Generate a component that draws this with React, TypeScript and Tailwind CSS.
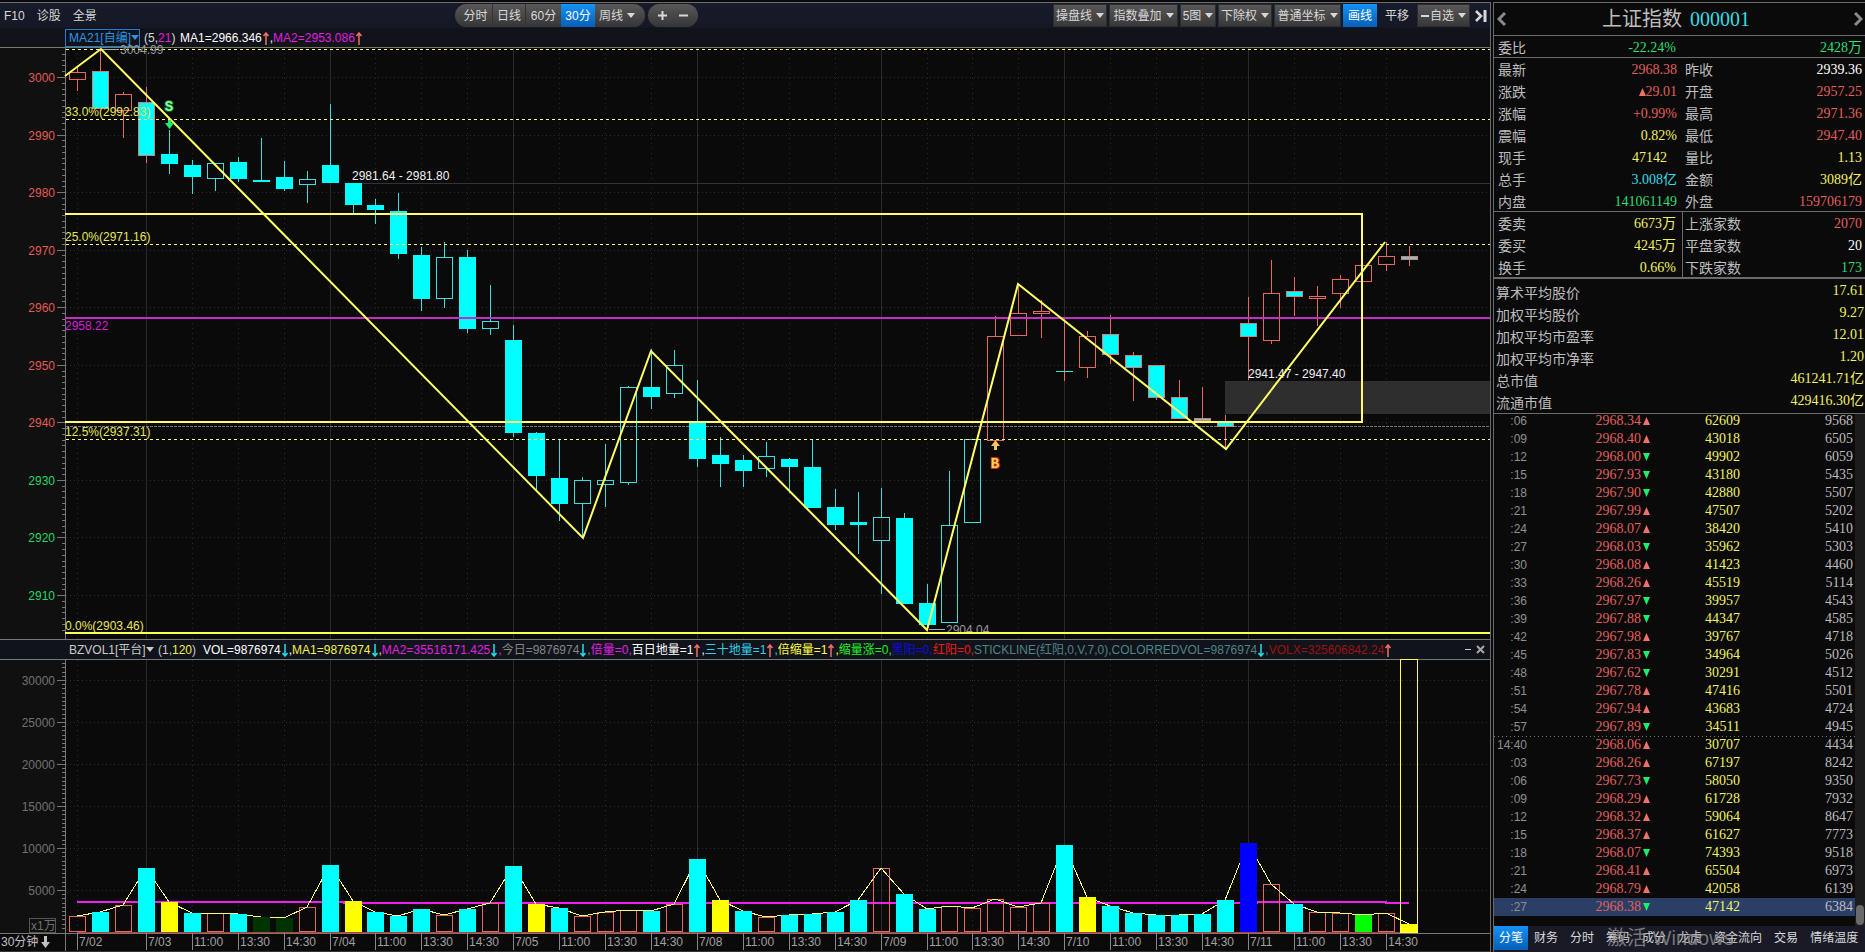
import React from 'react';

const SANS = "font-['Liberation_Sans','Noto_Sans_CJK_SC',sans-serif]";
const SERIF = "font-['Liberation_Serif','Noto_Sans_CJK_SC',serif]";

const CYAN = '#00ffff';
const TEAL = '#3fdede';
const RED = '#e8685f';
const YELLOW = '#ffff66';

type CandleKind = 'down' | 'hollow' | 'up' | 'mixed' | 'flat';

// kind, high, body top, body bottom, low
const candles: [CandleKind, number, number, number, number][] = [
    ['up', 67, 72, 80, 91], ['mixed', 49, 71, 109, 109], ['up', 92, 94, 111, 138], ['mixed', 87, 102, 156, 163],
    ['down', 130, 154, 164, 174], ['down', 160, 165, 177, 194], ['hollow', 163, 163, 179, 191], ['down', 157, 162, 179, 182],
    ['down', 138, 180, 182, 182], ['down', 161, 177, 189, 191], ['hollow', 171, 179, 185, 203], ['down', 104, 165, 183, 183],
    ['down', 183, 183, 205, 213], ['down', 199, 205, 210, 224], ['down', 193, 211, 254, 259], ['down', 247, 255, 299, 311],
    ['hollow', 242, 257, 299, 308], ['down', 250, 257, 329, 333], ['hollow', 285, 321, 329, 335], ['down', 325, 340, 433, 437],
    ['down', 432, 433, 476, 491], ['down', 440, 478, 504, 521], ['hollow', 477, 480, 504, 538], ['hollow', 444, 480, 485, 507],
    ['hollow', 386, 387, 483, 485], ['down', 349, 387, 397, 409], ['hollow', 350, 365, 394, 398], ['down', 380, 422, 459, 467],
    ['down', 437, 455, 464, 487], ['down', 455, 460, 471, 487], ['hollow', 442, 456, 469, 477], ['down', 458, 459, 467, 493],
    ['down', 440, 467, 508, 508], ['down', 489, 507, 525, 530], ['down', 492, 522, 525, 554], ['hollow', 488, 517, 541, 594],
    ['down', 513, 518, 604, 604], ['down', 584, 603, 625, 630], ['hollow', 471, 525, 623, 623], ['hollow', 439, 439, 523, 523],
    ['up', 316, 336, 441, 441], ['up', 285, 313, 336, 336], ['up', 300, 311, 314, 338], ['flat', 318, 371, 372, 381],
    ['up', 331, 336, 368, 378], ['mixed', 315, 334, 355, 364], ['mixed', 352, 355, 368, 401], ['mixed', 365, 365, 398, 400],
    ['mixed', 380, 397, 419, 419], ['mixed', 387, 418, 421, 421], ['mixed', 415, 422, 427, 449], ['mixed', 297, 323, 337, 380],
    ['up', 260, 293, 341, 344], ['mixed', 277, 291, 297, 316], ['up', 286, 296, 299, 326], ['up', 275, 279, 294, 308],
    ['up', 265, 265, 282, 282], ['up', 242, 256, 265, 271], ['mixed', 246, 256, 260, 266],
];

// bar colour and top edge
const volumes: [string, number][] = [
    ['r', 916], ['c', 912], ['r', 905], ['c', 868], ['y', 902], ['c', 913], ['r', 913], ['c', 914], ['g', 917], ['g', 918],
    ['r', 907], ['c', 865], ['y', 901], ['c', 912], ['c', 916], ['c', 909], ['r', 915], ['c', 909], ['r', 903], ['c', 866],
    ['y', 904], ['c', 908], ['r', 916], ['r', 912], ['r', 910], ['c', 911], ['r', 904], ['c', 859], ['y', 900], ['c', 911],
    ['r', 917], ['c', 915], ['c', 914], ['c', 912], ['c', 900], ['r', 868], ['c', 894], ['c', 909], ['r', 906], ['r', 908],
    ['r', 899], ['r', 907], ['r', 903], ['c', 845], ['y', 897], ['c', 906], ['c', 913], ['c', 915], ['c', 915], ['c', 914],
    ['c', 900], ['b', 843], ['r', 884], ['c', 904], ['r', 912], ['r', 913], ['l', 915], ['r', 913], ['y', 924],
];

const volumeFill: Record<string, string> = { c: CYAN, y: '#ffff00', g: '#003300', b: '#0000ff', l: '#00ff00' };

const timeLabels = ['7/02', '7/03', '11:00', '13:30', '14:30', '7/04', '11:00', '13:30', '14:30', '7/05', '11:00', '13:30', '14:30',
    '7/08', '11:00', '13:30', '14:30', '7/09', '11:00', '13:30', '14:30', '7/10', '11:00', '13:30', '14:30', '7/11', '11:00', '13:30', '14:30'];

const barX = (i: number) => Math.round(77 + 22.96 * i);
const priceY = (p: number) => Math.round(77 + (3000 - p) * 5.756);
const volumeY = (v: number) => Math.round(932 - (v / 5000) * 42);

const timeTicks = timeLabels.map((label, i) => ({
    label,
    x: barX(i === 0 ? 0 : 1 + i * 2),
    day: i > 0 && label.includes('/'),
}));

const VerticalGrid = ({ top, bottom }: { top: number; bottom: number }) => (
    <>
        {timeTicks.map((t) => (
            <line key={t.x} x1={t.x + 0.5} x2={t.x + 0.5} y1={top} y2={bottom}
                stroke={t.day ? '#2a2a2a' : '#2c2c2c'} strokeDasharray={t.day ? undefined : '1 4'} />
        ))}
    </>
);

const Candle = ({ i }: { i: number }) => {
    const [kind, high, top, bottom, low] = candles[i];
    const x = barX(i);
    const gray = i === candles.length - 1 || i === 49;
    const wick = kind === 'down' || kind === 'hollow' ? TEAL : RED;
    const hollow = kind === 'up' || kind === 'hollow';
    return (
        <g>
            {top > high && <rect x={x} y={high} width={1} height={top - high} fill={wick} />}
            {low > bottom && <rect x={x} y={bottom} width={1} height={low - bottom} fill={wick} />}
            {kind === 'down' && <rect x={x - 8} y={top} width={17} height={bottom - top} fill={CYAN} />}
            {kind === 'flat' && <rect x={x - 8} y={top} width={17} height={1} fill={TEAL} />}
            {hollow && <rect x={x - 7.5} y={top + 0.5} width={16} height={Math.max(bottom - top - 1, 1)} fill="none" stroke={wick} />}
            {kind === 'mixed' && (
                <rect x={x - 7.5} y={top + 0.5} width={16} height={bottom - top - 1} fill={gray ? '#7fc4c4' : CYAN} stroke="#c98480" />
            )}
        </g>
    );
};

const levels = [
    { y: 49, label: '' },
    { y: 119, label: '33.0%(2992.83)' },
    { y: 244, label: '25.0%(2971.16)' },
    { y: 439, label: '12.5%(2937.31)' },
];

const PriceChart = () => (
    <svg viewBox="0 48 1490 591" className="block w-full overflow-visible text-[12px]" role="img" aria-label="K线图">
        <rect x={0} y={48} width={65} height={591} fill="#101010" />
        <g shapeRendering="crispEdges">
            <VerticalGrid top={48} bottom={639} />
            {Array.from({ length: 10 }, (_, i) => priceY(3000 - i * 10)).map((y) => (
                <g key={y}>
                    <line x1={66} x2={1490} y1={y + 0.5} y2={y + 0.5} stroke="#2c2c2c" strokeDasharray="1 3" />
                    <line x1={57} x2={65} y1={y + 0.5} y2={y + 0.5} stroke="#777" />
                </g>
            ))}
            {Array.from({ length: 101 }, (_, i) => priceY(3004 - i)).map((y) => (
                <line key={y} x1={62} x2={65} y1={y + 0.5} y2={y + 0.5} stroke="#777" />
            ))}
            <line x1={65.5} x2={65.5} y1={48} y2={639} stroke="#777" />
            <rect x={1225} y={381} width={265} height={33} fill="#2e2e2e" />
            <line x1={361} x2={1490} y1={183.5} y2={183.5} stroke="#333" />
            <line x1={66} x2={1490} y1={426.5} y2={426.5} stroke="#777" strokeDasharray="3 1" />
            {candles.map((_, i) => <Candle key={i} i={i} />)}
            {levels.map((l) => (
                <line key={l.y} x1={66} x2={1490} y1={l.y + 0.5} y2={l.y + 0.5} stroke="#ffff80" strokeDasharray="3 3" />
            ))}
            <rect x={65} y={317} width={1425} height={2} fill="#c22fc2" />
            <path d="M65 214H1362V422H65" fill="none" stroke="#ffff70" strokeWidth={2} />
        </g>

        {Array.from({ length: 10 }, (_, i) => 3000 - i * 10).map((p) => (
            <text key={p} x={55} y={priceY(p) + 5} textAnchor="end" fill={p >= 2940 ? '#e25a55' : '#22d867'}>{p}</text>
        ))}
        <g fill="#e6e65c">
            {levels.map((l) => <text key={l.y} x={65} y={l.y - 3}>{l.label}</text>)}
            <text x={65} y={630}>0.0%(2903.46)</text>
        </g>
        <text x={65} y={330} fill="#d81fd8">2958.22</text>
        <text x={352} y={180} fill="#f0f0f0">2981.64 - 2981.80</text>
        <text x={1248} y={378} fill="#f0f0f0">2941.47 - 2947.40</text>

        <path d="M101 49.500H119M929 629.500H945" stroke="#aaa" fill="none" />
        <text x={120} y={54} fill="#9a9a9a">3004.99</text>
        <text x={946} y={634} fill="#9a9a9a">2904.04</text>
        <rect x={940} y={632} width={60} height={7} fill="#0a0a0a" />

        <polyline points="65,76 101,49 583,538 651,351 927,630 1018,284 1226,449 1385,242" fill="none" stroke={YELLOW} strokeWidth={2} />
        <rect x={65} y={632} width={1425} height={2} fill="#ffff50" />

        <text x={169} y={111} textAnchor="middle" fill="#8dffa6" stroke="#0b6b2a" strokeWidth={2} paintOrder="stroke"
            className="font-['Liberation_Mono',monospace] text-[14px] font-bold">S</text>
        <path d="M168 120h3v3h3l-4.500 6-4.500-6h3z" fill="#19f06a" />
        <path d="M994 450h3v-4h3l-4.500-6-4.500 6h3z" fill="#f0c860" />
        <text x={995} y={468} textAnchor="middle" fill="#ffcf5a" stroke="#c03010" strokeWidth={2} paintOrder="stroke"
            className="font-['Liberation_Mono',monospace] text-[14px] font-bold">B</text>
    </svg>
);

const VolumeChart = () => (
    <svg viewBox="0 660 1490 292" className="block w-full overflow-visible text-[12px]" role="img" aria-label="成交量">
        <rect x={0} y={660} width={65} height={273} fill="#101010" />
        <g shapeRendering="crispEdges">
            <VerticalGrid top={660} bottom={933} />
            {[5000, 10000, 15000, 20000, 25000, 30000].map((v) => (
                <g key={v}>
                    <line x1={66} x2={1490} y1={volumeY(v) + 0.5} y2={volumeY(v) + 0.5} stroke="#2c2c2c" strokeDasharray="1 3" />
                    <line x1={57} x2={65} y1={volumeY(v) + 0.5} y2={volumeY(v) + 0.5} stroke="#777" />
                </g>
            ))}
            {Array.from({ length: 64 }, (_, i) => volumeY(500 + i * 500)).map((y) => (
                <line key={y} x1={62} x2={65} y1={y + 0.5} y2={y + 0.5} stroke="#777" />
            ))}
            <line x1={65.5} x2={65.5} y1={660} y2={952} stroke="#777" />
            <line x1={0} x2={1490} y1={933.5} y2={933.5} stroke="#777" />
            <path d="M77 902H344V903H1257V902H1386V903H1409" fill="none" stroke="#f01ff0" strokeWidth={2} />
            {volumes.map(([c, y], i) => c === 'r' && (
                <rect key={i} x={barX(i) - 7.5} y={y + 0.5} width={16} height={931 - y} fill="none" stroke={RED} />
            ))}
            <polyline points={volumes.map(([, y], i) => `${barX(i)},${y}`).join(' ')} fill="none" stroke="#ffff80" />
            {volumes.map(([c, y], i) => c !== 'r' && (
                <rect key={i} x={barX(i) - 8} y={y} width={17} height={933 - y} fill={volumeFill[c]} />
            ))}
            <rect x={77} y={932} width={1323} height={1} fill="#c03a34" />
            <rect x={1400.5} y={659.5} width={17} height={273} fill="none" stroke="#ffff50" />
            {timeTicks.map((t) => (
                <line key={t.x} x1={t.x + 0.5} x2={t.x + 0.5} y1={933} y2={950} stroke="#888" />
            ))}
            <line x1={0} x2={1490} y1={951.5} y2={951.5} stroke="#333" />
            <rect x={29.5} y={918.5} width={26} height={14} fill="none" stroke="#555" />
        </g>
        {[5000, 10000, 15000, 20000, 25000, 30000].map((v) => (
            <text key={v} x={55} y={volumeY(v) + 5} textAnchor="end" fill="#707070">{v}</text>
        ))}
        <text x={31} y={930} fill="#707070">x1万</text>
        {timeTicks.map((t) => (
            <text key={t.x} x={t.x + 2} y={946} fill="#a0a0a0">{t.label}</text>
        ))}
        <text x={1} y={946} fill="#c0c0c0">30分钟</text>
        <path d="M44 936h3v6h3l-4.500 6-4.500-6h3z" fill="#c0c0c0" />
    </svg>
);

const Caret = () => (
    <svg viewBox="0 0 8 5" className="inline-block h-[5px] w-2 shrink-0" fill="currentColor" aria-hidden="true">
        <path d="M0 0h8L4 5z" />
    </svg>
);

const grayButton = 'flex h-[23px] items-center justify-center gap-1 border border-[#2c2c2c] bg-linear-to-b from-[#585858] to-[#383838]';
const blueButton = 'flex h-[23px] items-center justify-center bg-linear-to-b from-[#1592f5] to-[#0560b8] text-white';

const Toolbar = () => (
    <header className="flex h-[25px] items-center bg-linear-to-b from-[#171a2a] to-[#151824] text-[12px] leading-4 text-[#d8d8d8]">
        <nav className="flex w-[455px] gap-3 pl-1">
            <button>F10</button>
            <button>诊股</button>
            <button>全景</button>
        </nav>
        <div className="flex h-[23px] items-center overflow-hidden rounded-full bg-linear-to-b from-[#585858] to-[#363636]">
            <button className="h-full w-[38px] border-r border-[#333] pl-1">分时</button>
            <button className="h-full w-[33px] border-r border-[#333]">日线</button>
            <button className="h-full w-[35px]">60分</button>
            <button className={`${blueButton} w-[34px]`}>30分</button>
            <button className="flex h-full w-[50px] items-center gap-1 pl-1">周线 <Caret /></button>
        </div>
        <div className="ml-[3px] flex h-[23px] w-[50px] items-center justify-center gap-3 rounded-full bg-linear-to-b from-[#585858] to-[#363636]">
            <button aria-label="放大">
                <svg viewBox="0 0 9 9" className="size-[9px]" fill="currentColor"><path d="M3.500 0h2v3.500H9v2H5.500V9h-2V5.500H0v-2h3.500z" /></svg>
            </button>
            <button aria-label="缩小">
                <svg viewBox="0 0 9 9" className="size-[9px]" fill="currentColor"><path d="M0 3.500h9v2H0z" /></svg>
            </button>
        </div>
        <div className="ml-auto flex items-center gap-[2px]">
            <button className={`${grayButton} w-[54px]`}>操盘线<Caret /></button>
            <button className={`${grayButton} w-[69px]`}>指数叠加<Caret /></button>
            <button className={`${grayButton} w-9`}>5图<Caret /></button>
            <button className={`${grayButton} w-[54px]`}>下除权<Caret /></button>
            <button className={`${grayButton} w-[67px]`}>普通坐标<Caret /></button>
            <button className={`${blueButton} w-[34px]`}>画线</button>
            <button className="w-9">平移</button>
            <button className={`${grayButton} w-[53px]`}>
                <span className="flex items-center gap-px"><span className="h-0.5 w-2 bg-[#d8d8d8]" />自选</span><Caret />
            </button>
            <button className="flex w-[18px] justify-center" aria-label="收起">
                <svg viewBox="0 0 12 12" className="size-3" fill="none" stroke="currentColor">
                    <path d="M1 1l5 5-5 5" strokeWidth="2.5" />
                    <path d="M10 0v12" strokeWidth="3" />
                </svg>
            </button>
        </div>
    </header>
);

const Arrow = ({ up }: { up?: boolean }) => (
    <svg viewBox="0 0 8 13" className={up ? 'inline-block h-[13px] w-2 text-[#f0706a]' : 'inline-block h-[13px] w-2 text-[#20e0f0]'}
        fill="none" stroke="currentColor" strokeWidth="1.5" aria-hidden="true">
        <path d={up ? 'M4 13V1M1.500 4L4 1l2.500 3' : 'M4 0v12M1.500 9L4 12l2.500-3'} />
    </svg>
);

const PriceIndicators = () => (
    <div className="flex h-5 items-center border-b border-[#7a7a60] bg-[#11131a] pl-[65px] text-[12px] leading-4 whitespace-pre text-[#d8d8d8]">
        <button className="flex h-[18px] items-center border border-[#1d7fd4] pl-[3px] text-[#2c93e8]">MA21[自编]<Caret /></button>
        <span className="ml-1 w-9">(5,<span className="text-[#e01fe0]">21</span>)</span>
        <span className="text-white">MA1=2966.346<Arrow up />,</span>
        <span className="text-[#e01fe0]">MA2=2953.086<Arrow up /></span>
    </div>
);

const VolumeIndicators = () => (
    <div className="flex h-5 items-center border-b border-[#777] bg-[#11131a] pr-1 pl-[69px] text-[12px] leading-4 whitespace-pre text-[#c8c8c8]">
        <button className="flex w-[89px] items-center">BZVOL1[平台]<Caret /></button>
        <span className="w-[45px]">(1,<span className="text-[#f0f050]">120</span>)</span>
        <span className="text-white">VOL=9876974<Arrow />,</span>
        <span className="text-[#f0f050]">MA1=9876974<Arrow />,</span>
        <span className="text-[#e01fe0]">MA2=35516171.425<Arrow />,</span>
        <span className="text-[#858585]">今日=9876974<Arrow />,</span>
        <span className="text-[#e01fe0]">倍量=0,</span>
        <span className="text-white">百日地量=1<Arrow up />,</span>
        <span className="text-[#30cfe6]">三十地量=1<Arrow up />,</span>
        <span className="text-[#ffff40]">倍缩量=1<Arrow up />,</span>
        <span className="text-[#20f020]">缩量涨=0,</span>
        <span className="text-[#0a0ae6]">黑阳=0,</span>
        <span className="text-[#f01818]">红阳=0,</span>
        <span className="text-[#4b8585]">STICKLINE(红阳,0,V,7,0),COLORREDVOL=9876974<Arrow />,</span>
        <span className="text-[#9c1212]">VOLX=325606842.24<Arrow up /></span>
        <button className="ml-auto flex h-4 w-4 items-center justify-center" aria-label="最小化"><span className="h-px w-1.5 bg-[#c8c8c8]" /></button>
        <button className="mr-px" aria-label="关闭">
            <svg viewBox="0 0 9 9" className="size-[9px]" stroke="#a8a8a8" strokeWidth="2"><path d="M1 1l7 7M8 1L1 8" /></svg>
        </button>
    </div>
);

const red = 'text-[#e0605c]';
const green = 'text-[#2fdc72]';
const yellow = 'text-[#f2f266]';
const cyan = 'text-[#35dde6]';

type Cell = [string, string, string];

const quotes: [Cell, Cell][] = [
    [['最新', '2968.38', red], ['昨收', '2939.36', 'text-white']],
    [['涨跌', '29.01', red], ['开盘', '2957.25', red]],
    [['涨幅', '+0.99%', red], ['最高', '2971.36', red]],
    [['震幅', '0.82%', yellow], ['最低', '2947.40', red]],
    [['现手', '47142', yellow], ['量比', '1.13', yellow]],
    [['总手', '3.008亿', cyan], ['金额', '3089亿', yellow]],
    [['内盘', '141061149', green], ['外盘', '159706179', red]],
];

const breadth: [Cell, Cell][] = [
    [['委卖', '6673万', yellow], ['上涨家数', '2070', red]],
    [['委买', '4245万', yellow], ['平盘家数', '20', 'text-white']],
    [['换手', '0.66%', yellow], ['下跌家数', '173', green]],
];

const averages = [
    ['算术平均股价', '17.61'],
    ['加权平均股价', '9.27'],
    ['加权平均市盈率', '12.01'],
    ['加权平均市净率', '1.20'],
    ['总市值', '461241.71亿'],
    ['流通市值', '429416.30亿'],
];

// time, price, up?, volume, count
const ticks: [string, string, boolean, number, number][] = [
    [':06', '2968.34', true, 62609, 9568], [':09', '2968.40', true, 43018, 6505], [':12', '2968.00', false, 49902, 6059],
    [':15', '2967.93', false, 43180, 5435], [':18', '2967.90', false, 42880, 5507], [':21', '2967.99', true, 47507, 5202],
    [':24', '2968.07', true, 38420, 5410], [':27', '2968.03', false, 35962, 5303], [':30', '2968.08', true, 41423, 4460],
    [':33', '2968.26', true, 45519, 5114], [':36', '2967.97', false, 39957, 4543], [':39', '2967.88', false, 44347, 4585],
    [':42', '2967.98', true, 39767, 4718], [':45', '2967.83', false, 34964, 5026], [':48', '2967.62', false, 30291, 4512],
    [':51', '2967.78', true, 47416, 5501], [':54', '2967.94', true, 43683, 4724], [':57', '2967.89', false, 34511, 4945],
    ['14:40', '2968.06', true, 30707, 4434], [':03', '2968.26', true, 67197, 8242], [':06', '2967.73', false, 58050, 9350],
    [':09', '2968.29', true, 61728, 7932], [':12', '2968.32', true, 59064, 8647], [':15', '2968.37', true, 61627, 7773],
    [':18', '2968.07', false, 74393, 9518], [':21', '2968.41', true, 65504, 6973], [':24', '2968.79', true, 42058, 6139],
    [':27', '2968.38', false, 47142, 6384],
];

const Triangle = ({ up }: { up: boolean }) => (
    <svg viewBox="0 0 7 8" className={up ? 'inline-block h-2 w-[7px] align-baseline text-[#f0706a]' : 'inline-block h-2 w-[7px] align-baseline text-[#19f06a]'}
        fill="currentColor" aria-hidden="true">
        <path d={up ? 'M3.500 0L7 8H0z' : 'M0 0h7L3.500 8z'} />
    </svg>
);

const QuoteRow = ({ left, right, divided }: { left: Cell; right: Cell; divided?: boolean }) => (
    <div className="flex h-[22px] leading-6">
        <div className={`flex w-[189px] justify-between pr-1.5 pl-1 ${divided ? 'border-r border-[#6a6a6a]' : ''}`}>
            <dt>{left[0]}</dt>
            <dd className={`${SERIF} ${left[2]} ${left[0] === '现手' ? 'pr-2.5' : ''}`}>
                {left[0] === '涨跌' && <Triangle up />}{left[1]}
            </dd>
        </div>
        <div className="flex flex-1 justify-between pr-[3px] pl-0.5">
            <dt>{right[0]}</dt>
            <dd className={`${SERIF} ${right[2]}`}>{right[1]}</dd>
        </div>
    </div>
);

const Chevron = ({ d }: { d: string }) => (
    <svg viewBox="0 0 9 14" className="h-3.5 w-[9px]" fill="none" stroke="#8a8a8a" strokeWidth="3"><path d={d} /></svg>
);

const tabs = ['分笔', '财务', '分时', '筹码', '成分', '龙虎', '资金流向', '交易', '情绪温度'];

const QuotePanel = () => (
    <aside className="flex flex-col border-t border-l border-[#6a6a6a] text-[14px] text-[#bdbdbd]">
        <div className="flex h-[33px] items-center border-b border-[#6a6a6a] pr-0.5 pl-[3px]">
            <button aria-label="上一个"><Chevron d="M8 1L2 7l6 6" /></button>
            <h1 className="flex flex-1 items-center justify-center gap-2 pr-2 text-[20px]">
                上证指数 <span className={`${SERIF} ${cyan}`}>000001</span>
            </h1>
            <button aria-label="下一个"><Chevron d="M1 1l6 6-6 6" /></button>
        </div>
        <dl className="flex h-[22px] border-b border-[#6a6a6a] pr-[3px] pl-1 leading-6">
            <dt>委比</dt>
            <dd className={`${SERIF} ${green} w-[150px] text-right`}>-22.24%</dd>
            <dd className={`${SERIF} ${green} ml-auto`}>2428万</dd>
        </dl>
        <dl className="h-[154px] border-b border-[#6a6a6a]">
            {quotes.map(([l, r]) => <QuoteRow key={l[0]} left={l} right={r} />)}
        </dl>
        <dl className="h-[67px] overflow-hidden border-b-2 border-[#6a6a6a]">
            {breadth.map(([l, r]) => <QuoteRow key={l[0]} left={l} right={r} divided />)}
        </dl>
        <dl className="border-b border-[#6a6a6a] pt-0.5">
            {averages.map(([label, value]) => (
                <div key={label} className="flex h-[22px] justify-between pr-px pl-0.5">
                    <dt className="leading-6">{label}</dt>
                    <dd className={`${SERIF} ${yellow} leading-5`}>{value}</dd>
                </div>
            ))}
        </dl>
        <div className="flex overflow-hidden">
            <table className="-mt-0.5 mb-2.5 flex-1 table-fixed border-collapse text-right">
                <tbody className={SERIF}>
                    {ticks.map(([time, price, up, volume, count], i) => (
                        <tr key={i} className={`h-[18px] leading-[18px] ${i === ticks.length - 1 ? 'bg-[#2a3e66]' : ''} ${i === 18 ? 'bg-[linear-gradient(to_right,#777_1px,transparent_1px)] bg-[size:4px_1px] bg-repeat-x' : ''}`}>
                            <td className={`${SANS} w-[33px] p-0 text-[12px] text-[#8f8f8f]`}>{time}</td>
                            <td className={`${red} w-[123px] p-0`}>{price}<span className="pl-0.5"><Triangle up={up} /></span></td>
                            <td className={`${yellow} w-[90px] p-0`}>{volume}</td>
                            <td className="py-0 pr-0.5 pl-0">{count}</td>
                        </tr>
                    ))}
                </tbody>
            </table>
            <div className="flex w-2.5 flex-col justify-end bg-[#1c1c1c] px-px pb-px">
                <div className="h-5 rounded-full bg-[#6a6a6a]" />
            </div>
        </div>
        <nav className="relative flex flex-1 items-start bg-[#191a26] text-[12px] whitespace-nowrap text-[#d8d8d8]">
            {tabs.map((tab, i) => (
                <button key={tab} className={`h-6 ${i === 0 ? 'bg-linear-to-b from-[#1592f5] to-[#0560b8] px-[5px] text-white' : 'px-1.5'}`}>{tab}</button>
            ))}
            <span className="pointer-events-none absolute top-0 left-[113px] text-[20px] leading-6 text-[#909090]/80">激活 Windows</span>
        </nav>
    </aside>
);

const App: React.FC = () => {
    return (
        <div className={`${SANS} grid min-h-screen grid-cols-[minmax(0,1fr)_372px] gap-0.5 overflow-hidden bg-[#0a0a0a] pt-0.5`}>
            <main className="border-t border-r border-[#6a6a6a]">
                <Toolbar />
                <PriceIndicators />
                <PriceChart />
                <div className="border-t border-[#777]">
                    <VolumeIndicators />
                </div>
                <VolumeChart />
            </main>
            <QuotePanel />
        </div>
    );
};

export default App;
